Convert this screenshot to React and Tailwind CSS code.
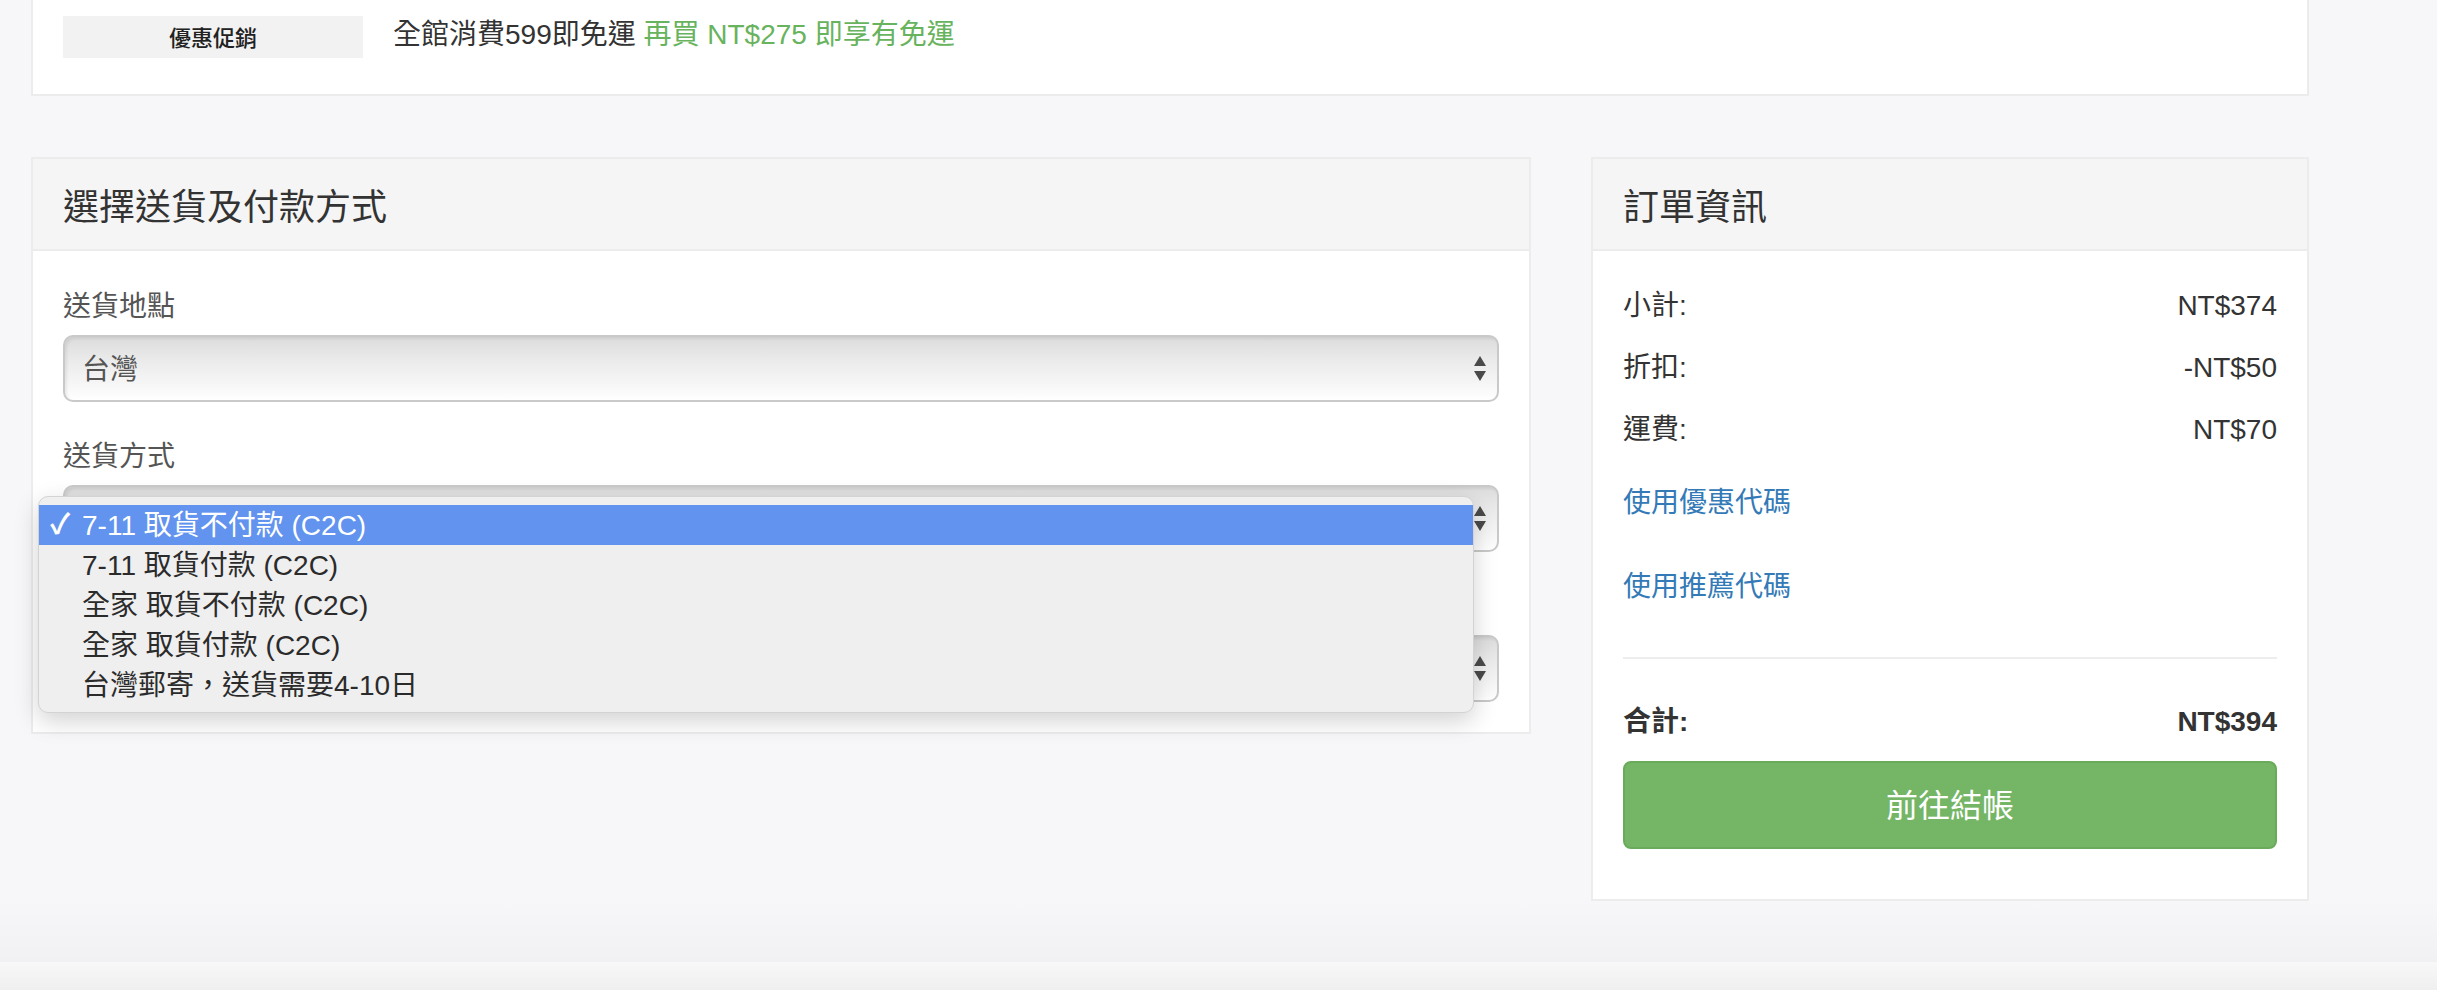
import React from "react";

const shippingOptions = [
  "7-11 取貨不付款 (C2C)",
  "7-11 取貨付款 (C2C)",
  "全家 取貨不付款 (C2C)",
  "全家 取貨付款 (C2C)",
  "台灣郵寄，送貨需要4-10日",
];

const Arrows = () => (
  <svg width="12" height="26" viewBox="0 0 12 26" className="shrink-0">
    <polygon points="0,10 6,0 12,10" fill="#4a4a4a" />
    <polygon points="0,15 12,15 6,25" fill="#4a4a4a" />
  </svg>
);

// native-looking select box (value is covered by the open menu for the lower ones)
const FakeSelect = ({ value }) => (
  <div className="flex h-[67px] items-center rounded-[10px] border-2 border-[#c9c9c9] bg-[linear-gradient(to_bottom,#dcdcdc_0%,#eaeaea_35%,#f5f5f5_72%,#ffffff_100%)] pl-[17px] pr-[11px] shadow-[inset_2px_2px_3px_rgba(0,0,0,0.07)]">
    <span className="flex-1 pt-[2px] text-[28px] leading-[40px] text-[#555]">{value}</span>
    <Arrows />
  </div>
);

const Field = ({ label, children }) => (
  <div>
    <div className="mb-[13px] h-[40px] pt-[5px] text-[28px] leading-[40px] text-[#555]">{label}</div>
    {children}
  </div>
);

const PanelHeading = ({ title }) => (
  <div className="flex h-[92px] items-center border-b-2 border-[#ececec] bg-[#f5f5f5] px-[30px] pt-[7px]">
    <h3 className="text-[36px] leading-[40px] text-[#333]">{title}</h3>
  </div>
);

const SummaryRow = ({ label, value, bold }) => (
  <div
    className={
      "flex h-[40px] items-center justify-between text-[28px] leading-[40px] text-[#333] " +
      (bold ? "font-bold" : "")
    }
  >
    <span>{label}</span>
    <span>{value}</span>
  </div>
);

export default function App() {
  return (
    <div className="flex h-[990px] flex-col overflow-hidden bg-[#f7f7f9] [font-family:'Liberation_Sans','Noto_Sans_CJK_TC',sans-serif]">
      {/* promo card, scrolled partly out of view */}
      <div className="ml-[31px] w-[2278px] border-2 border-t-0 border-[#ececec] bg-white pb-[36px] pl-[30px] pt-[16px]">
        <div className="flex items-center gap-[30px]">
          <div className="flex h-[42px] w-[300px] items-center justify-center bg-[#f2f2f2] pt-[2px] text-[22px] font-medium text-[#222]">
            優惠促銷
          </div>
          <p className="-mt-[4px] text-[28px] leading-[40px] text-[#333]">
            全館消費599即免運{" "}
            <span className="text-[#68b35d]">再買 NT$275 即享有免運</span>
          </p>
        </div>
      </div>

      <div className="ml-[31px] mt-[61px] flex items-start gap-[60px]">
        {/* shipping & payment */}
        <div className="w-[1500px] border-2 border-[#ececec] bg-white">
          <PanelHeading title="選擇送貨及付款方式" />
          <div className="flex flex-col gap-[30px] px-[30px] pb-[30px] pt-[31px]">
            <Field label="送貨地點">
              <FakeSelect value="台灣" />
            </Field>
            <Field label="送貨方式">
              <div className="relative">
                <FakeSelect value="" />
                <ul className="absolute left-[-25px] top-[11px] z-10 w-[1436px] rounded-[10px] border border-[#d3d3d3] bg-[#efefef] pb-[7px] pt-[8px] text-[28px] text-[#2b2b2b] shadow-[0_8px_24px_rgba(0,0,0,0.18)]">
                  {shippingOptions.map((opt, i) => (
                    <li
                      key={opt}
                      className={
                        "flex h-[40px] items-center " +
                        (i === 0 ? "bg-[#6193ef] text-white" : "")
                      }
                    >
                      <span className="w-[43px] pl-[11px] text-[28px] font-bold">{i === 0 ? "✓" : ""}</span>
                      <span className="pt-[2px]">{opt}</span>
                    </li>
                  ))}
                </ul>
              </div>
            </Field>
            <Field label="">
              <FakeSelect value="" />
            </Field>
          </div>
        </div>

        {/* order summary */}
        <div className="w-[718px] border-2 border-[#ececec] bg-white">
          <PanelHeading title="訂單資訊" />
          <div className="px-[30px] pb-[50px] pt-[35px]">
            <div className="flex flex-col gap-[22px]">
              <SummaryRow label="小計:" value="NT$374" />
              <SummaryRow label="折扣:" value="-NT$50" />
              <SummaryRow label="運費:" value="NT$70" />
            </div>
            <a className="mt-[33px] block h-[40px] text-[28px] leading-[40px] text-[#337ab7]">使用優惠代碼</a>
            <a className="mt-[44px] block h-[40px] text-[28px] leading-[40px] text-[#337ab7]">使用推薦代碼</a>
            <hr className="mt-[50px] border-t-2 border-[#ededed]" />
            <div className="mt-[43px]">
              <SummaryRow label="合計:" value="NT$394" bold />
            </div>
            <button className="mt-[19px] h-[88px] w-full rounded-[8px] border-2 border-[#69ab5b] bg-[#74b566] pt-[2px] text-[32px] text-white">
              前往結帳
            </button>
          </div>
        </div>
      </div>

      <div className="h-[61px] bg-[linear-gradient(to_bottom,#f7f7f9,#f1f1f3)]" />
      <div className="flex-1 bg-[linear-gradient(to_bottom,#f8f8f8,#efefef)]" />
    </div>
  );
}
